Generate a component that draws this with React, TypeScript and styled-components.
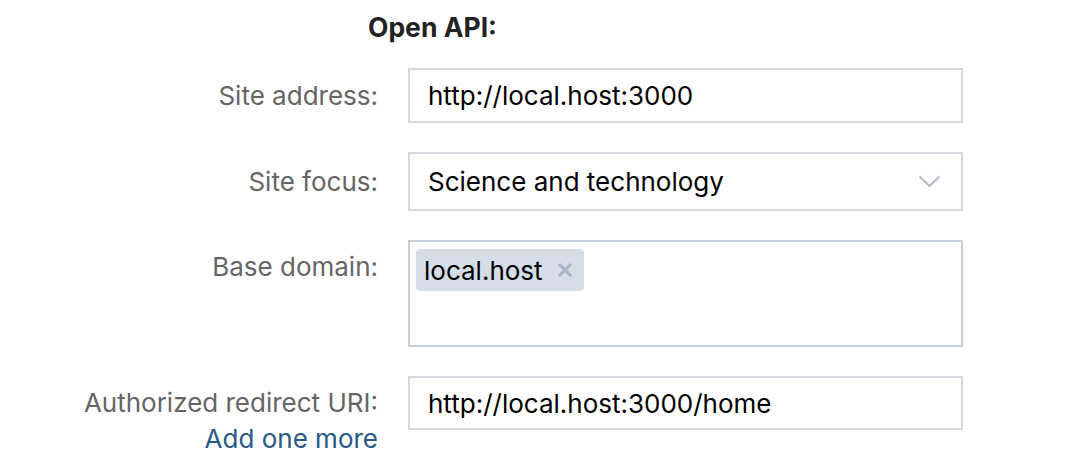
import React from "react";
import styled, { createGlobalStyle } from "styled-components";

const GlobalStyle = createGlobalStyle`
    body {
        margin: 0;
        background: #fff;
        font-family: Inter, "Liberation Sans", Arial, sans-serif;
    }
`;

const Page = styled.div`
    padding-top: 11px;
    font-size: 26px;
    color: #000;
`;

const Heading = styled.h2`
    margin: 0 0 25px 368px;
    font-size: 26.5px;
    line-height: 32px;
    font-weight: 700;
    color: #222;
`;

const Form = styled.div`
    display: grid;
    grid-template-columns: 378px 555px;
    column-gap: 30px;
    row-gap: 29px;
`;

const Label = styled.div<{ $top?: boolean }>`
    display: flex;
    flex-direction: column;
    align-items: flex-end;
    align-self: ${(p) => (p.$top ? "start" : "center")};
    padding-top: ${(p) => (p.$top ? "10px" : "0")};
    color: #656565;
    line-height: 33px;
    white-space: nowrap;
`;

const Link = styled.a`
    color: #2a5885;
    text-decoration: none;
    line-height: 28px;
    margin-top: 6px;
    cursor: pointer;
`;

const Field = styled.div<{ $height: number }>`
    box-sizing: border-box;
    height: ${(p) => p.$height}px;
    border: 2px solid #d3d9de;
    padding: 0 18px;
    display: flex;
    align-items: center;
    justify-content: space-between;
    background: #fff;
    line-height: 33px;
    align-self: start;
`;

const TagBox = styled.div`
    box-sizing: border-box;
    height: 107px;
    border: 2px solid #c5d0db;
    padding: 7px 6px;
    display: flex;
    align-items: flex-start;
    flex-wrap: wrap;
    gap: 6px;
`;

const Tag = styled.span`
    display: inline-flex;
    align-items: center;
    gap: 14px;
    height: 42px;
    padding: 0 11px 0 8px;
    border-radius: 4px;
    background: #d5dde6;
    color: #000;
`;

const Remove = styled.svg`
    display: block;
`;

const Chevron = styled.svg`
    display: block;
    margin-right: 2px;
`;

export default function App() {
    return (
        <Page>
            <GlobalStyle />
            <Heading>Open API:</Heading>
            <Form>
                <Label>Site address:</Label>
                <Field $height={55}>http://local.host:3000</Field>

                <Label>Site focus:</Label>
                <Field $height={59}>
                    Science and technology
                    <Chevron width="23" height="13" viewBox="0 0 23 13">
                        <polyline
                            points="1.5,1.5 11.5,11 21.5,1.5"
                            fill="none"
                            stroke="#b2bcc7"
                            strokeWidth="2.2"
                        />
                    </Chevron>
                </Field>

                <Label $top>Base domain:</Label>
                <TagBox>
                    <Tag>
                        local.host
                        <Remove width="16" height="16" viewBox="0 0 16 16">
                            <path
                                d="M2 2 L14 14 M14 2 L2 14"
                                stroke="#a6b3c1"
                                strokeWidth="3"
                            />
                        </Remove>
                    </Tag>
                </TagBox>

                <Label $top>
                    Authorized redirect URI:
                    <Link>Add one more</Link>
                </Label>
                <Field $height={54}>http://local.host:3000/home</Field>
            </Form>
        </Page>
    );
}
